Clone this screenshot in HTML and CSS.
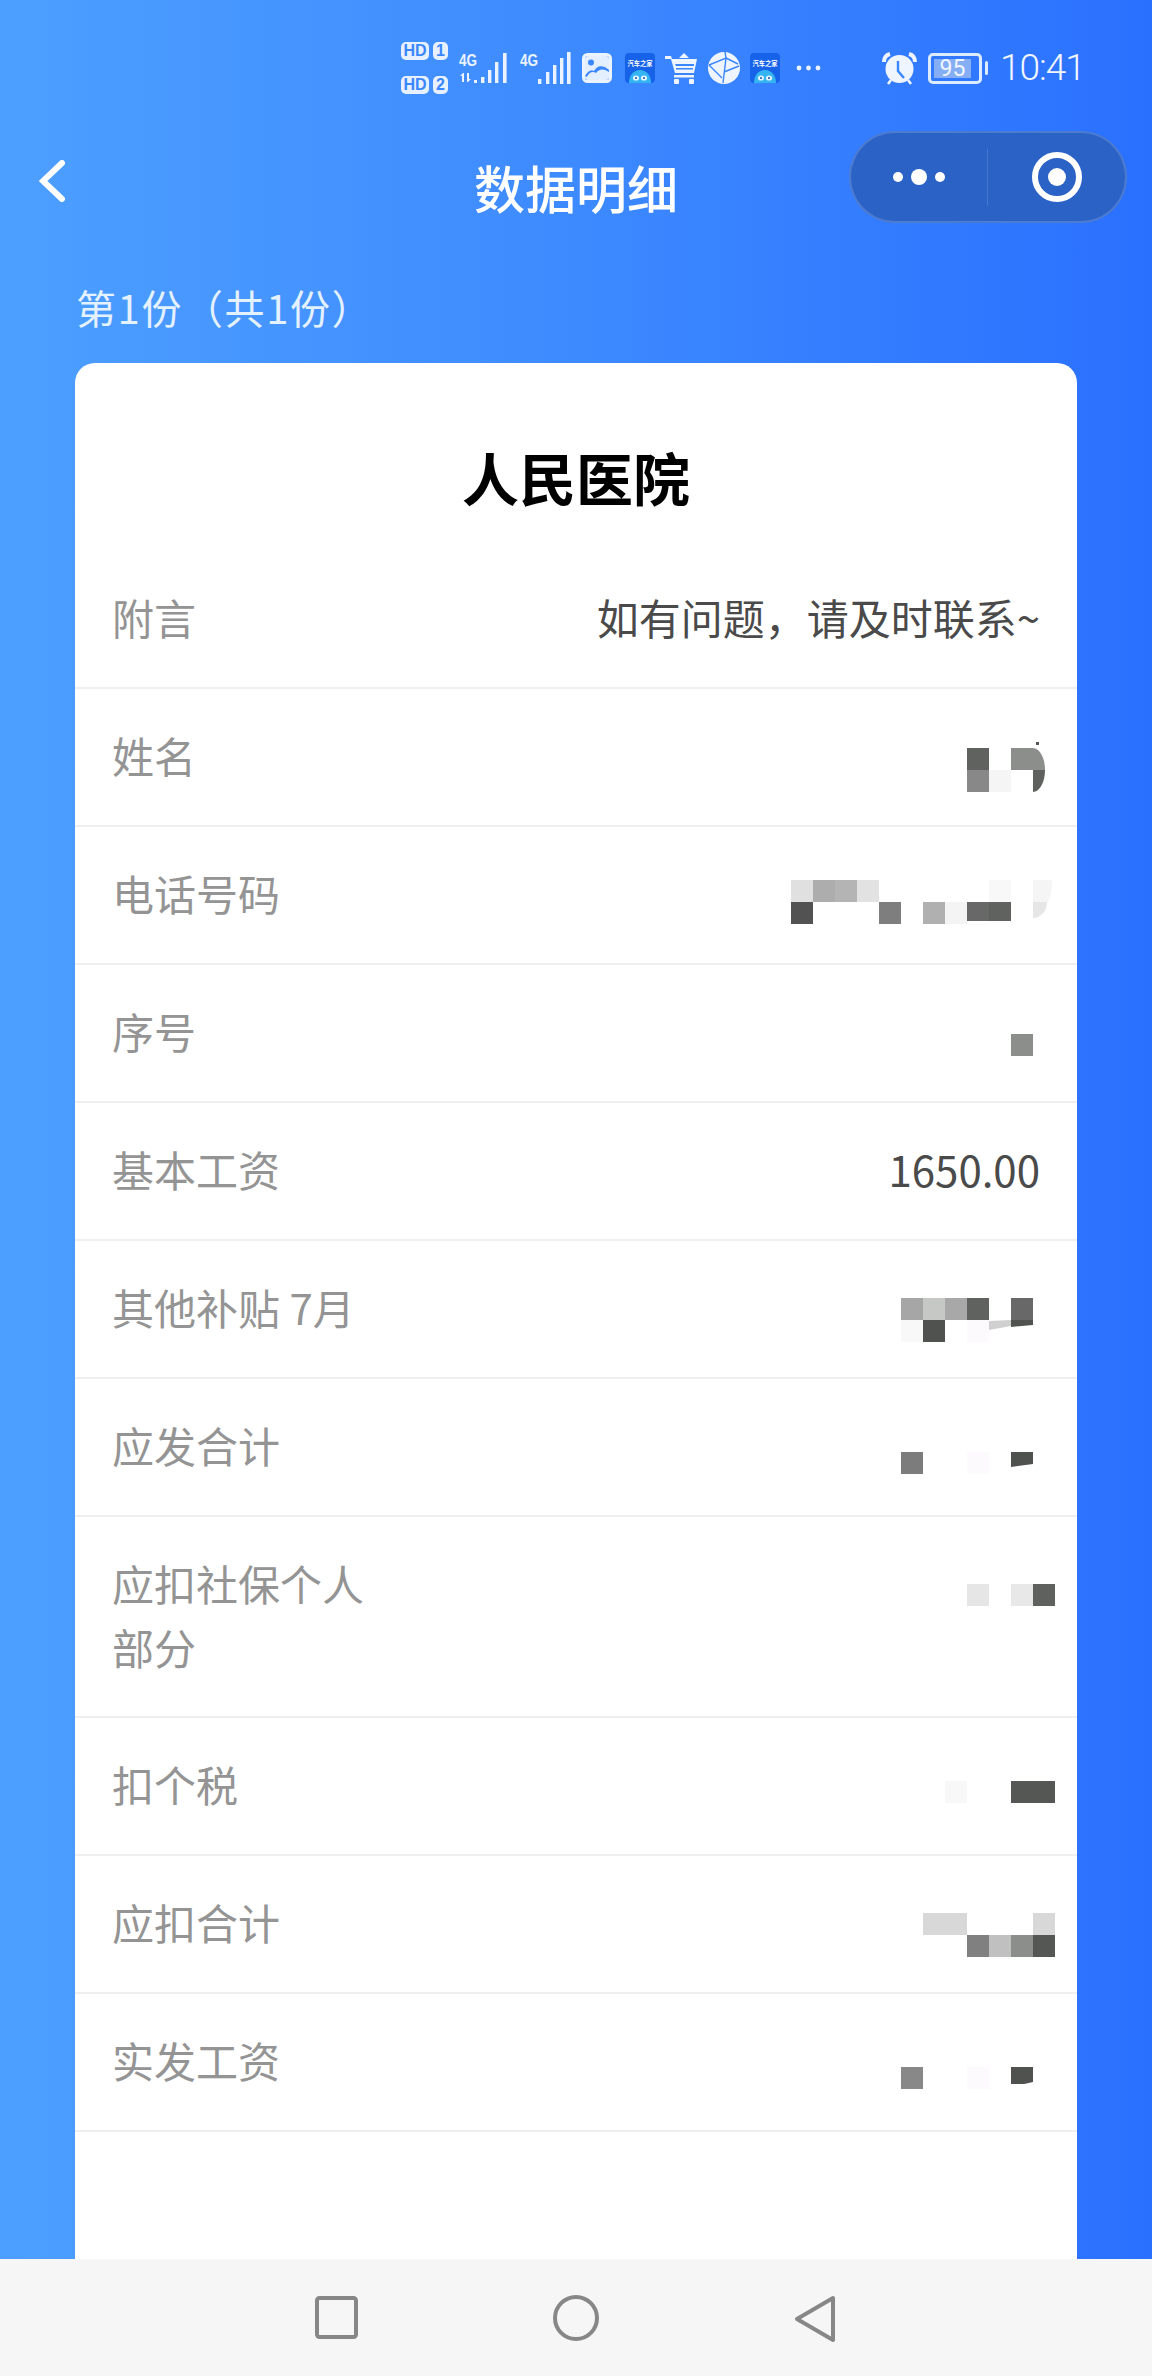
FILE: index.html
```html
<!DOCTYPE html>
<html lang="zh-CN">
<head>
<meta charset="utf-8">
<title>数据明细</title>
<link rel="stylesheet" href="styles.css">
</head>
<body>
<div class="screen">
  <div class="top">
    <div class="status">
      <div class="hd">
        <span class="hd-tag">HD</span><span class="hd-num">1</span>
        <span class="hd-tag">HD</span><span class="hd-num">2</span>
      </div>
      <svg class="sig sig1" viewBox="0 0 51 32" fill="#eaf3ff">
        <text x="0" y="14" class="g4" textLength="18" lengthAdjust="spacingAndGlyphs">4G</text>
        <path d="M4 21l-3 3h2v6h2v-9zM9 30l3-3h-2v-6H8v9z"/>
        <rect x="15" y="28" width="3" height="3"/>
        <rect x="22" y="25" width="3.4" height="6"/><rect x="29" y="18" width="3.4" height="13"/><rect x="36" y="10" width="3.4" height="21"/><rect x="44" y="1" width="3.6" height="30"/>
      </svg>
      <svg class="sig sig2" viewBox="0 0 51 32" fill="#eaf3ff">
        <text x="0" y="14" class="g4" textLength="18" lengthAdjust="spacingAndGlyphs">4G</text>
        <rect x="18" y="27" width="3.4" height="5"/><rect x="26" y="20" width="3.4" height="12"/><rect x="33" y="13" width="3.4" height="19"/><rect x="40" y="6" width="3.4" height="26"/><rect x="47" y="0" width="3.6" height="32"/>
      </svg>
      <svg class="ico-img" viewBox="0 0 30 30">
        <rect x="1.5" y="1.5" width="27" height="27" rx="4" fill="none" stroke="#eaf3ff" stroke-width="3"/>
        <rect x="3" y="3" width="24" height="24" rx="3" fill="#eaf3ff" opacity=".96"/>
        <circle cx="9" cy="9.5" r="3" fill="#3a86ff"/>
        <path d="M3 23c3-5 6-7 9-5 3-5 8-7 15-1v2c-6-4-10-3-13 1-3-2-7-1-9 4z" fill="#3a86ff"/>
      </svg>
      <svg class="ico-app app1" viewBox="0 0 30 30">
        <rect width="30" height="30" rx="4" fill="#1662e8"/>
        <text x="15" y="13" class="app-txt" text-anchor="middle" textLength="25" lengthAdjust="spacingAndGlyphs">汽车之家</text>
        <path d="M4 30c0-8 5-13 11-13s11 5 11 13z" fill="#35b4f2"/>
        <ellipse cx="11" cy="25" rx="3" ry="2.6" fill="#e8f6ff"/><ellipse cx="19" cy="25" rx="3" ry="2.6" fill="#e8f6ff"/>
        <circle cx="11" cy="25" r="1" fill="#1a4f9c"/><circle cx="19" cy="25" r="1" fill="#1a4f9c"/>
      </svg>
      <svg class="ico-cart" viewBox="0 0 33 32" fill="#eef5ff">
        <path d="M0 4h6l1 3h25l-3 14H10L6 7H0z"/>
        <path d="M19 1l5 5h-10z"/>
        <path d="M10 12h19v2H11zM11 16h17v1.6H11z" fill="#3a86ff"/>
        <rect x="9" y="23" width="20" height="2.5"/>
        <rect x="9" y="27" width="5" height="5" rx="1"/><rect x="24" y="27" width="5" height="5" rx="1"/>
      </svg>
      <svg class="ico-globe" viewBox="0 0 32 32">
        <circle cx="16" cy="16" r="16" fill="#eef5ff"/>
        <path d="M1 13L18 6l-3 25M18 6l-1-6M1 13l13 13M18 6l12 6M16 20l15-6" fill="none" stroke="#3a86ff" stroke-width="1.4"/>
      </svg>
      <svg class="ico-app app2" viewBox="0 0 30 30">
        <rect width="30" height="30" rx="4" fill="#1662e8"/>
        <text x="15" y="13" class="app-txt" text-anchor="middle" textLength="25" lengthAdjust="spacingAndGlyphs">汽车之家</text>
        <path d="M4 30c0-8 5-13 11-13s11 5 11 13z" fill="#35b4f2"/>
        <ellipse cx="11" cy="25" rx="3" ry="2.6" fill="#e8f6ff"/><ellipse cx="19" cy="25" rx="3" ry="2.6" fill="#e8f6ff"/>
        <circle cx="11" cy="25" r="1" fill="#1a4f9c"/><circle cx="19" cy="25" r="1" fill="#1a4f9c"/>
      </svg>
      <svg class="ico-more" viewBox="0 0 25 6" fill="#eaf3ff"><circle cx="3" cy="3" r="2.4"/><circle cx="12.5" cy="3" r="2.4"/><circle cx="22" cy="3" r="2.4"/></svg>
      <svg class="ico-alarm" viewBox="0 0 35 32">
        <circle cx="17.5" cy="17" r="14" fill="#eef5ff"/>
        <path d="M16 9v10l6 7" fill="none" stroke="#3a86ff" stroke-width="2.4"/>
        <path d="M2 10c0-4 2-7 6-8M33 10c0-4-2-7-6-8" fill="none" stroke="#eef5ff" stroke-width="4"/>
        <path d="M9 28l-3 4M26 28l3 4" stroke="#eef5ff" stroke-width="2.6"/>
      </svg>
      <div class="battery"><span class="battery-body"><span class="battery-level">95</span></span><span class="battery-nub"></span></div>
      <span class="time">10:41</span>
    </div>

    <div class="nav">
      <svg class="back" viewBox="0 0 26 42"><path d="M23 3L4 21l19 18" fill="none" stroke="#fff" stroke-width="6" stroke-linecap="round" stroke-linejoin="miter"/></svg>
      <h1 class="title">数据明细</h1>
      <div class="capsule">
        <div class="cap-more"><i class="dot"></i><i class="dot big"></i><i class="dot"></i></div>
        <div class="cap-line"></div>
        <div class="cap-close"><i class="ring"></i></div>
      </div>
    </div>
    <p class="count">第1份（共1份）</p>
  </div>

  <main class="card">
    <h2 class="org">人民医院</h2>
    <div class="row"><span class="label">附言</span><span class="value">如有问题，请及时联系~</span></div>

    <div class="row"><span class="label">姓名</span>
      <div class="mosaic mt25">
        <i class="x9 s60"></i><i class="x11 s8c"></i><i class="x12 s8c arc-top speck"></i>
        <i class="x9 r2 s88"></i><i class="x10 r2 sf6"></i><i class="x12 r2 s5e arc-bot"></i>
      </div>
    </div>

    <div class="row"><span class="label">电话号码</span>
      <div class="mosaic mt19">
        <i class="x1 se0"></i><i class="x2 sae"></i><i class="x3 sb4"></i><i class="x4 se2"></i><i class="x10 sf8"></i><i class="x12 sf6 arc-wide-top"></i>
        <i class="x1 r2 s52"></i><i class="x5 r2 s7e"></i><i class="x7 r2 sb0"></i><i class="x8 r2 sf4"></i><i class="x9 r2 s68 short"></i><i class="x10 r2 s60 short"></i><i class="x12 r2 se6 arc-wide-bot"></i>
      </div>
    </div>

    <div class="row"><span class="label">序号</span>
      <div class="mosaic mt35"><i class="x11 s8c"></i></div>
    </div>

    <div class="row"><span class="label">基本工资</span><span class="value">1650.00</span></div>

    <div class="row"><span class="label">其他补贴 7月</span>
      <div class="mosaic mt23">
        <i class="x6 sa6"></i><i class="x7 sc8"></i><i class="x8 sa8"></i><i class="x9 s60"></i><i class="x11 s68"></i>
        <i class="x6 r2 sf8"></i><i class="x7 r2 s50"></i><i class="x9 r2 sfc"></i><i class="x10 r2 sd0 sliver-a"></i><i class="x11 r2 s50 sliver-b"></i>
      </div>
    </div>

    <div class="row"><span class="label">应发合计</span>
      <div class="mosaic mt39"><i class="x6 s7c"></i><i class="x9 sfc"></i><i class="x11 s50 slant"></i></div>
    </div>

    <div class="row row-tall"><span class="label">应扣社保个人部分</span>
      <div class="mosaic mt33"><i class="x9 se6"></i><i class="x11 se8"></i><i class="x12 s5e"></i></div>
    </div>

    <div class="row"><span class="label">扣个税</span>
      <div class="mosaic mt29"><i class="x8 sf8"></i><i class="x11 s55"></i><i class="x12 s55"></i></div>
    </div>

    <div class="row"><span class="label">应扣合计</span>
      <div class="mosaic mt23">
        <i class="x7 sd8"></i><i class="x8 sd8"></i><i class="x12 sd8"></i>
        <i class="x9 r2 s80"></i><i class="x10 r2 sc0"></i><i class="x11 r2 s8c"></i><i class="x12 r2 s55"></i>
      </div>
    </div>

    <div class="row"><span class="label">实发工资</span>
      <div class="mosaic mt39"><i class="x6 s88"></i><i class="x9 sfc"></i><i class="x11 s50 slant-round"></i></div>
    </div>
  </main>

  <div class="softkeys">
    <svg class="key-square" viewBox="0 0 43 43"><rect x="2" y="2" width="39" height="39" rx="2.5" fill="none" stroke="#878787" stroke-width="4"/></svg>
    <svg class="key-circle" viewBox="0 0 46 46"><circle cx="23" cy="23" r="21" fill="none" stroke="#878787" stroke-width="4"/></svg>
    <svg class="key-back" viewBox="0 0 42 48"><path d="M39 3L3 24l36 21z" fill="none" stroke="#878787" stroke-width="4" stroke-linejoin="round"/></svg>
  </div>
</div>
</body>
</html>
```

FILE: styles.css
```css
* { box-sizing: border-box; }
html, body { margin: 0; padding: 0; height: 100%; }
body { font-family: "Noto Sans CJK SC", "Noto Sans", sans-serif; overflow: hidden; text-spacing-trim: space-all; }
i { display: block; font-style: normal; }

.screen {
  width: 1152px;
  height: 2376px;
  display: flex;
  flex-direction: column;
  overflow: hidden;
  background: linear-gradient(90deg, #4d9fff 0%, #3f8cff 45%, #2a70ff 100%);
}
.top { flex: none; }

/* status bar */
.status {
  height: 52px;
  margin-top: 42px;
  padding-left: 401px;
  display: flex;
  align-items: center;
  color: #eaf3ff;
}
.status svg { display: block; flex: none; overflow: visible; }
.hd {
  display: grid;
  grid-template-columns: 28px 15px;
  grid-auto-rows: 18px;
  column-gap: 4px;
  row-gap: 16px;
  width: 47px;
}
.hd-tag, .hd-num {
  background: #e6f0ff;
  border-radius: 5px;
  color: #3a86ff;
  font: 700 16px/18px "Liberation Sans", sans-serif;
  text-align: center;
}
.sig { width: 51px; height: 32px; }
.sig1 { margin-left: 11px; }
.sig2 { margin-left: 10px; }
.g4 { font: 700 16px "Liberation Sans", sans-serif; }
.ico-img { width: 30px; height: 30px; margin-left: 11px; }
.ico-app { width: 30px; height: 30px; }
.app1 { margin-left: 13px; }
.app2 { margin-left: 10px; }
.app-txt { font: 700 6.5px "Noto Sans CJK SC", sans-serif; fill: #fff; }
.ico-cart { width: 33px; height: 32px; margin-left: 10px; }
.ico-globe { width: 32px; height: 32px; margin-left: 10px; }
.ico-more { width: 25px; height: 6px; margin-left: 16px; }
.ico-alarm { width: 35px; height: 32px; margin-left: 61px; }
.battery { display: flex; align-items: center; margin-left: 11px; gap: 3px; }
.battery-body {
  width: 54px;
  height: 31px;
  border: 3px solid #dcebff;
  border-radius: 5px;
  padding: 3px;
  display: flex;
}
.battery-level {
  width: 37px;
  background: #86aef5;
  color: #f0f6ff;
  font: 400 23px/19px "Roboto", sans-serif;
  text-align: center;
}
.battery-nub { width: 3px; height: 14px; background: #dcebff; border-radius: 2px; }
.time {
  margin-left: 12px;
  font: 300 37px/52px "Roboto", sans-serif;
  letter-spacing: -1px;
  color: #f2f7ff;
}

/* nav bar */
.nav {
  height: 92px;
  margin-top: 37px;
  padding: 0 25px;
  display: grid;
  grid-template-columns: 1fr auto 1fr;
  align-items: center;
}
.back { width: 26px; height: 42px; margin: 7px 0 0 14px; justify-self: start; display: block; }
.title {
  margin: 0;
  padding-top: 20px;
  font-size: 51px;
  font-weight: 500;
  line-height: 64px;
  color: #fff;
}
.capsule {
  justify-self: end;
  width: 278px;
  height: 92px;
  border-radius: 46px;
  border: 2px solid rgba(255, 255, 255, .16);
  background: #2a62c6;
  display: flex;
  align-items: center;
}
.cap-more { width: 136px; display: flex; align-items: center; justify-content: center; gap: 8px; }
.dot { width: 10px; height: 10px; border-radius: 50%; background: #fff; }
.dot.big { width: 16px; height: 16px; }
.cap-line { width: 1px; height: 56px; background: rgba(255, 255, 255, .14); }
.cap-close { flex: 1; display: flex; justify-content: center; }
.ring {
  width: 50px;
  height: 50px;
  border-radius: 50%;
  border: 6px solid #fff;
  display: flex;
  align-items: center;
  justify-content: center;
}
.ring::after { content: ""; width: 18px; height: 18px; border-radius: 50%; background: #fff; }

.count {
  margin: 59px 0 31px 76px;
  font-size: 40px;
  line-height: 50px;
  letter-spacing: 1.6px;
  color: #e4f1ff;
}

/* card */
.card {
  flex: 1;
  min-height: 0;
  margin: 0 75px;
  background: #fff;
  border-radius: 20px 20px 0 0;
  overflow: hidden;
}
.org {
  margin: 0;
  height: 188px;
  padding-top: 73px;
  font-size: 57px;
  font-weight: 700;
  line-height: 80px;
  text-align: center;
  color: #000;
}
.row {
  height: 138px;
  padding: 34px 37px 0;
  border-bottom: 2px solid #efefef;
  display: flex;
  justify-content: space-between;
  align-items: flex-start;
  font-size: 42px;
  line-height: 64px;
}
.row-tall { height: 201px; }
.label { width: 260px; flex: none; color: #949494; }
.value { color: #4a4a4a; white-space: nowrap; }

/* redacted values: pixelated mosaic, 22px cells */
.mosaic {
  display: grid;
  grid-template-columns: repeat(12, 22px);
  grid-template-rows: repeat(2, 22px);
  margin-right: -15px;
  flex: none;
}
.mt19 { margin-top: 19px; }
.mt23 { margin-top: 23px; }
.mt25 { margin-top: 25px; }
.mt29 { margin-top: 29px; }
.mt33 { margin-top: 33px; }
.mt35 { margin-top: 35px; }
.mt39 { margin-top: 39px; }
.mosaic i { grid-row: 1; height: 22px; }
.mosaic .r2 { grid-row: 2; }
.x1 { grid-column: 1; } .x2 { grid-column: 2; } .x3 { grid-column: 3; } .x4 { grid-column: 4; }
.x5 { grid-column: 5; } .x6 { grid-column: 6; } .x7 { grid-column: 7; } .x8 { grid-column: 8; }
.x9 { grid-column: 9; } .x10 { grid-column: 10; } .x11 { grid-column: 11; } .x12 { grid-column: 12; }
.s50 { background: #505250; } .s52 { background: #525252; } .s55 { background: #555755; }
.s5e { background: #5e615e; } .s60 { background: #606260; } .s68 { background: #686868; }
.s7c { background: #7c7c7c; } .s7e { background: #7e7e7e; } .s80 { background: #808080; }
.s88 { background: #888888; } .s8c { background: #8c8e8c; } .sa6 { background: #a6a6a6; }
.sa8 { background: #a8a8a8; } .sae { background: #adadad; } .sb0 { background: #b0b0b0; }
.sb4 { background: #b4b4b4; } .sc0 { background: #c0c0c0; } .sc8 { background: #c6c8c6; }
.sd0 { background: #d0d0d0; } .sd8 { background: #d8d8d8; } .se0 { background: #e0e0e0; }
.se2 { background: #e2e2e2; } .se6 { background: #e6e6e6; } .se8 { background: #e8e8e8; }
.sf4 { background: #f4f4f4; } .sf6 { background: #f6f5f5; } .sf8 { background: #f8f8f8; }
.sfc { background: #fcfafc; }
.mosaic .arc-top { width: 12px; border-top-right-radius: 12px 22px; }
.mosaic .arc-bot { width: 12px; border-bottom-right-radius: 12px 22px; }
.mosaic .arc-wide-top { width: 19px; border-bottom-right-radius: 5px 22px; }
.mosaic .arc-wide-bot { width: 14px; height: 16px; border-bottom-right-radius: 14px 16px; }
.mosaic .short { height: 19px; }
.mosaic .sliver-a { clip-path: polygon(0 1px, 100% 0, 100% 6px, 0 10px); }
.mosaic .sliver-b { clip-path: polygon(0 0, 100% 0, 100% 5px, 0 7px); }
.mosaic .slant { clip-path: polygon(0 0, 100% 0, 100% 12px, 0 15px); }
.mosaic .slant-round { clip-path: polygon(0 0, 100% 0, 100% 15px, 60% 17px, 0 17px); }
.speck { position: relative; }
.speck::after {
  content: "";
  position: absolute;
  left: 3px;
  top: -6px;
  width: 3px;
  height: 3px;
  background: #555;
}

/* system soft keys */
.softkeys {
  flex: none;
  height: 117px;
  background: #f6f6f6;
  display: grid;
  grid-template-columns: 43px 46px 42px;
  justify-content: start;
  align-items: start;
  padding: 37px 0 0 315px;
  column-gap: 195px;
}
.softkeys svg { display: block; }
.key-square { width: 43px; height: 43px; }
.key-circle { width: 46px; height: 46px; margin-top: -1px; }
.key-back { width: 42px; height: 48px; margin-top: -1px; }
```
